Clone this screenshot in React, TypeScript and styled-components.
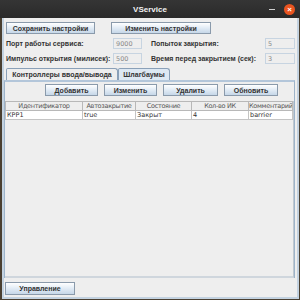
import React from "react";
import styled, { createGlobalStyle } from "styled-components";

const Global = createGlobalStyle`
  html, body { margin: 0; padding: 0; }
  body { width: 300px; height: 300px; overflow: hidden; background: #4a3f30; font-family: "Liberation Sans", Arial, sans-serif; }
`;

const Frame = styled.div`
  width: 300px;
  height: 300px;
  display: flex;
  flex-direction: column;
`;

const TitleBar = styled.div`
  height: 18px;
  flex: none;
  background: linear-gradient(#353535, #2a2a2a);
  display: flex;
  align-items: center;
  justify-content: center;
  position: relative;
  color: #f2f2f2;
  font-family: "Liberation Sans", sans-serif;
  font-weight: bold;
  font-size: 8px;
`;

const TitleControls = styled.div`
  position: absolute;
  right: 5px;
  top: 4px;
  display: flex;
  align-items: center;
  gap: 9px;
`;

const MinBtn = styled.div`
  width: 6px;
  height: 1px;
  background: #cfcfcf;
`;

const CloseBtn = styled.div`
  width: 11px;
  height: 11px;
  border-radius: 50%;
  background: #e95420;
  color: #fff;
  font-size: 8px;
  line-height: 11px;
  text-align: center;
  font-weight: bold;
`;

const Body = styled.div`
  flex: 1;
  display: flex;
  padding-left: 2px;
`;

const Content = styled.div`
  flex: 1;
  background: #eeeeee;
  border-left: 2px solid #c3d2e0;
  border-right: 2px solid #c3d2e0;
  border-bottom: 2px solid #c3d2e0;
  margin-right: 1px;
  margin-bottom: 1px;
  padding: 4px 0 0 0;
  display: flex;
  flex-direction: column;
`;

const Row = styled.div<{ $gap?: number }>`
  display: flex;
  gap: ${(p) => p.$gap ?? 0}px;
  margin-left: 2px;
`;

const Button = styled.button<{ $w: number; $h?: number }>`
  width: ${(p) => p.$w}px;
  height: ${(p) => p.$h ?? 12}px;
  padding: 0;
  margin: 0;
  border: 1px solid #8a9aab;
  background: linear-gradient(#ffffff 0%, #e4edf6 45%, #c6d7e8 100%);
  font-family: "Liberation Sans", sans-serif;
  font-weight: bold;
  font-size: 7px;
  color: #333;
  white-space: nowrap;
  display: flex;
  align-items: center;
  justify-content: center;
`;

const Form = styled.div`
  display: grid;
  grid-template-columns: 107px 29px 123px 30px;
  grid-auto-rows: 11px;
  row-gap: 4px;
  margin: 4px 0 0 2px;
`;

const Label = styled.div<{ $pad?: number }>`
  font-size: 7px;
  font-weight: bold;
  color: #333;
  display: flex;
  align-items: center;
  padding-left: ${(p) => p.$pad ?? 0}px;
  white-space: nowrap;
`;

const Field = styled.div`
  border: 1px solid #c7d4e1;
  background: #eeeeee;
  color: #8a8a8a;
  font-family: "DejaVu Sans", sans-serif;
  font-size: 6.5px;
  display: flex;
  align-items: center;
  padding-left: 2px;
`;

const Tabs = styled.div`
  display: flex;
  margin-top: 4px;
  padding-left: 2px;
  height: 12px;
  flex: none;
`;

const Tab = styled.div<{ $w: number; $sel?: boolean }>`
  width: ${(p) => p.$w}px;
  box-sizing: border-box;
  border: 1px solid #8aa0b8;
  border-bottom: none;
  border-radius: 2px 3px 0 0;
  background: ${(p) => (p.$sel ? "#dde8f3" : "#eeeeee")};
  font-size: 7px;
  font-weight: bold;
  color: #333;
  white-space: nowrap;
  display: flex;
  align-items: center;
  justify-content: center;
`;

const TabPanel = styled.div`
  flex: 1;
  margin-right: 2px;
  border: 1px solid #9db3c9;
  border-top: 2px solid #b3c6da;
  border-bottom: none;
  display: flex;
  flex-direction: column;
  padding: 2px 0 0 0;
`;

const Toolbar = styled.div`
  display: flex;
  gap: 6px;
  padding-left: 40px;
`;

const Scroll = styled.div`
  margin-top: 5px;
  flex: 1;
  border-bottom: 2px solid #cfd6dd;
  border-right: 1px solid #bfc8d0;
`;

const Table = styled.table`
  border-collapse: collapse;
  width: 100%;
  table-layout: fixed;
  font-family: "DejaVu Sans", sans-serif;
  font-size: 6.5px;
`;

const Th = styled.th<{ $w?: number }>`
  width: ${(p) => (p.$w ? `${p.$w}px` : "auto")};
  height: 8px;
  padding: 0;
  font-weight: normal;
  color: #555;
  background: #eeeeee;
  border: 1px solid #b8b8b8;
  text-align: center;
  letter-spacing: -0.3px;
  white-space: nowrap;
  overflow: hidden;
`;

const Td = styled.td`
  height: 8px;
  padding: 0 0 0 1px;
  background: #fff;
  color: #333;
  border: 1px solid #c4c4c4;
  white-space: nowrap;
  overflow: hidden;
`;

const Footer = styled.div`
  padding: 4px 0 2px 1px;
  flex: none;
`;

export default function App() {
  return (
    <>
      <Global />
      <Frame>
        <TitleBar>
          VService
          <TitleControls>
            <MinBtn />
            <CloseBtn>×</CloseBtn>
          </TitleControls>
        </TitleBar>
        <Body>
          <Content>
            <Row $gap={16}>
              <Button $w={89}>Сохранить настройки</Button>
              <Button $w={100}>Изменить настройки</Button>
            </Row>
            <Form>
              <Label>Порт работы сервиса:</Label>
              <Field>9000</Field>
              <Label $pad={9}>Попыток закрытия:</Label>
              <Field>5</Field>
              <Label>Импульс открытия (милисек):</Label>
              <Field>500</Field>
              <Label $pad={9}>Время перед закрытием (сек):</Label>
              <Field>3</Field>
            </Form>
            <Tabs>
              <Tab $w={112}>Контроллеры ввода/вывода</Tab>
              <Tab $w={52} $sel>Шлагбаумы</Tab>
            </Tabs>
            <TabPanel>
              <Toolbar>
                <Button $w={53}>Добавить</Button>
                <Button $w={53}>Изменить</Button>
                <Button $w={55}>Удалить</Button>
                <Button $w={54}>Обновить</Button>
              </Toolbar>
              <Scroll>
                <Table>
                  <thead>
                    <tr>
                      <Th $w={76}>Идентификатор</Th>
                      <Th $w={52}>Автозакрытие</Th>
                      <Th $w={55}>Состояние</Th>
                      <Th $w={56}>Кол-во ИК</Th>
                      <Th>Комментарий</Th>
                    </tr>
                  </thead>
                  <tbody>
                    <tr>
                      <Td>КРР1</Td>
                      <Td>true</Td>
                      <Td>Закрыт</Td>
                      <Td>4</Td>
                      <Td>barrier</Td>
                    </tr>
                  </tbody>
                </Table>
              </Scroll>
            </TabPanel>
            <Footer>
              <Button $w={70} $h={13}>Управление</Button>
            </Footer>
          </Content>
        </Body>
      </Frame>
    </>
  );
}
